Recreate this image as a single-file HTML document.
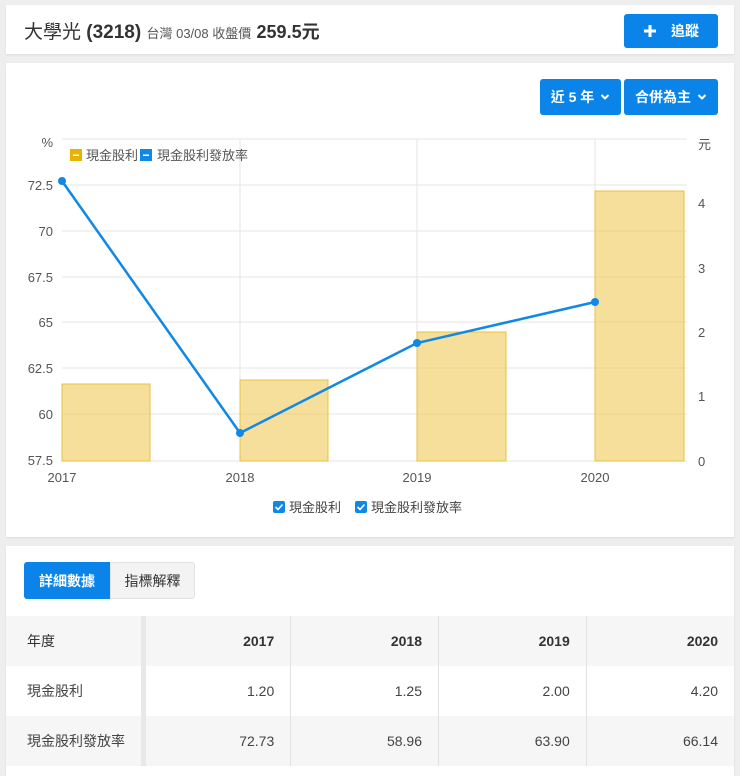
<!DOCTYPE html>
<html><head><meta charset="utf-8"><style>
*{box-sizing:border-box;margin:0;padding:0}
body{width:740px;height:770px;background:#eeeeee;font-family:"Liberation Sans","Noto Sans CJK TC",sans-serif;position:relative;overflow:hidden;color:#333}
.card{position:absolute;left:6px;width:728px;background:#fff;box-shadow:0 1px 2px rgba(0,0,0,.08)}
.btn{position:absolute;background:#0a84e8;color:#fff;border-radius:3px;font-size:14px;font-weight:bold;display:flex;align-items:center;justify-content:center}
table{border-collapse:collapse;position:absolute;left:0;top:70px;width:728px;font-size:14px;table-layout:fixed}
td{height:50px;border-right:1px solid #e2e2e2;padding:0 16px;text-align:right;color:#444;white-space:nowrap}
td:first-child{text-align:left;width:137px;padding-left:21px;padding-right:0;border-right:5px solid #e8e8e8}
tr.g td{background:#f6f6f6}
tr.h td{font-weight:bold;color:#333}
td:last-child{border-right:none}
</style></head><body>
<div class="card" style="top:5px;height:49px">
  <div style="position:absolute;left:18px;top:12px;font-size:19px;color:#333;white-space:nowrap">大學光 <b style="font-weight:bold">(3218)</b> <span style="font-size:13px;color:#555">台灣 03/08 收盤價</span> <b style="font-size:18px">259.5元</b></div>
  <div class="btn" style="left:618px;top:9px;width:94px;height:34px"><svg width="14" height="14" style="margin-right:14px"><path d="M7 1v12M1 7h12" stroke="#fff" stroke-width="3"/></svg>追蹤</div>
</div>
<div class="card" style="top:63px;height:474px">
  <div class="btn" style="left:534px;top:16px;width:81px;height:36px">近 5 年<svg width="10" height="8" style="margin-left:6px"><path d="M1.5 2l3.5 3.5 3.5-3.5" stroke="#fff" stroke-width="2" fill="none"/></svg></div>
  <div class="btn" style="left:618px;top:16px;width:94px;height:36px">合併為主<svg width="10" height="8" style="margin-left:6px"><path d="M1.5 2l3.5 3.5 3.5-3.5" stroke="#fff" stroke-width="2" fill="none"/></svg></div>
</div>
<svg style="position:absolute;left:0;top:0" width="740" height="540" font-family="Liberation Sans, Noto Sans CJK TC, sans-serif">
 <g stroke="#e6e6e6" stroke-width="1">
  <line x1="62" y1="139" x2="687" y2="139"/><line x1="62" y1="185" x2="687" y2="185"/><line x1="62" y1="231" x2="687" y2="231"/><line x1="62" y1="277" x2="687" y2="277"/><line x1="62" y1="322" x2="687" y2="322"/><line x1="62" y1="368" x2="687" y2="368"/><line x1="62" y1="414" x2="687" y2="414"/><line x1="62" y1="461" x2="687" y2="461"/>
  <line x1="240" y1="139" x2="240" y2="461"/><line x1="417" y1="139" x2="417" y2="461"/><line x1="595" y1="139" x2="595" y2="461"/>
 </g>
 <g fill="rgba(240,206,100,0.65)" stroke="#e8c040" stroke-width="1">
  <rect x="62" y="384" width="88" height="77"/><rect x="240" y="380" width="88" height="81"/><rect x="417" y="332" width="89" height="129"/><rect x="595" y="191" width="89" height="270"/>
 </g>
 <polyline points="62,181 240,433 417,343 595,302" fill="none" stroke="#1088e6" stroke-width="2.5"/>
 <g fill="#1088e6"><circle cx="62" cy="181" r="4"/><circle cx="240" cy="433" r="4"/><circle cx="417" cy="343" r="4"/><circle cx="595" cy="302" r="4"/></g>
 <g font-size="13" fill="#555" text-anchor="end">
  <text x="53" y="147">%</text><text x="53" y="190">72.5</text><text x="53" y="236">70</text><text x="53" y="282">67.5</text><text x="53" y="327">65</text><text x="53" y="373">62.5</text><text x="53" y="419">60</text><text x="53" y="465">57.5</text>
 </g>
 <g font-size="13" fill="#555">
  <text x="698" y="149">元</text><text x="698" y="208">4</text><text x="698" y="273">3</text><text x="698" y="337">2</text><text x="698" y="401">1</text><text x="698" y="466">0</text>
 </g>
 <g font-size="13" fill="#555" text-anchor="middle"><text x="62" y="482">2017</text><text x="240" y="482">2018</text><text x="417" y="482">2019</text><text x="595" y="482">2020</text></g>
 <rect x="70" y="149" width="12" height="12" fill="#e6b300"/><rect x="73" y="154.5" width="6" height="1.5" fill="#fff"/>
 <text x="86" y="160" font-size="13" fill="#555">現金股利</text>
 <rect x="140" y="149" width="12" height="12" fill="#1088e6"/><rect x="143" y="154.5" width="6" height="1.5" fill="#fff"/>
 <text x="157" y="160" font-size="13" fill="#555">現金股利發放率</text>
 <rect x="273" y="501" width="12" height="12" rx="2" fill="#1088e6"/><path d="M275.5 507l2.5 2.5 4.5-5" stroke="#fff" stroke-width="1.6" fill="none"/>
 <text x="289" y="512" font-size="13" fill="#444">現金股利</text>
 <rect x="355" y="501" width="12" height="12" rx="2" fill="#1088e6"/><path d="M357.5 507l2.5 2.5 4.5-5" stroke="#fff" stroke-width="1.6" fill="none"/>
 <text x="371" y="512" font-size="13" fill="#444">現金股利發放率</text>
</svg>
<div class="card" style="top:546px;height:230px">
  <div style="position:absolute;left:18px;top:16px;width:86px;height:37px;background:#0a84e8;color:#fff;font-size:14px;font-weight:bold;display:flex;align-items:center;justify-content:center;border-radius:3px 0 0 3px">詳細數據</div>
  <div style="position:absolute;left:104px;top:16px;width:85px;height:37px;background:#f3f3f3;border:1px solid #e2e2e2;color:#333;font-size:14px;display:flex;align-items:center;justify-content:center;border-radius:0 3px 3px 0">指標解釋</div>
  <table>
   <tr class="g h"><td style="font-weight:normal">年度</td><td>2017</td><td>2018</td><td>2019</td><td>2020</td></tr>
   <tr><td>現金股利</td><td>1.20</td><td>1.25</td><td>2.00</td><td>4.20</td></tr>
   <tr class="g"><td>現金股利發放率</td><td>72.73</td><td>58.96</td><td>63.90</td><td>66.14</td></tr>
  </table>
</div>
</body></html>
